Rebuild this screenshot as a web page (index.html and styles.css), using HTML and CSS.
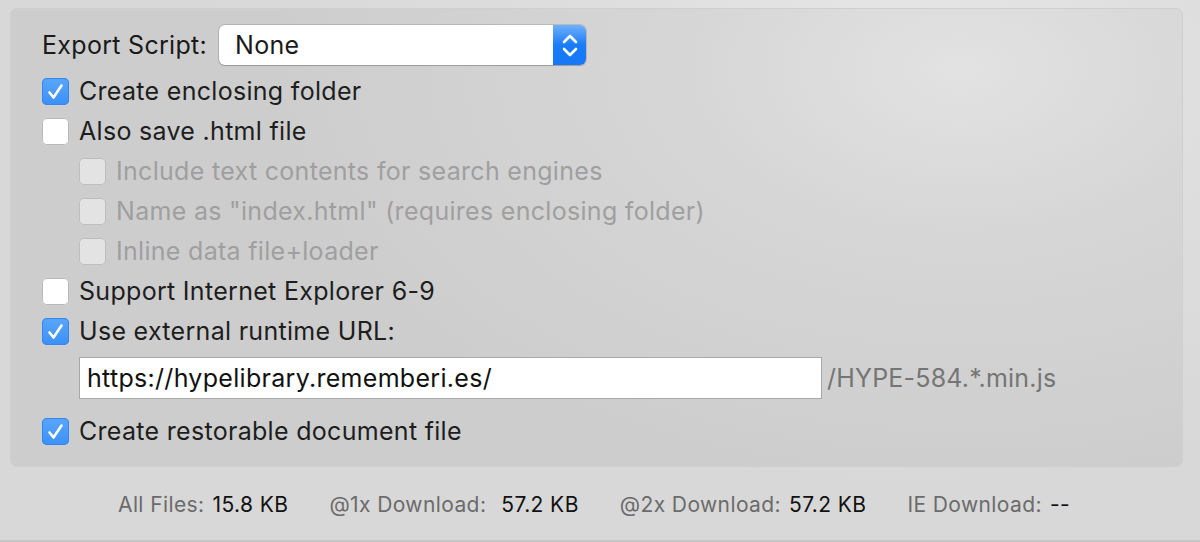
FILE: index.html
```html
<!DOCTYPE html>
<html>
<head>
<meta charset="utf-8">
<link rel="stylesheet" href="styles.css">
</head>
<body>
<div class="window">
  <div class="panel">
    <div class="row export">
      <span class="label">Export Script:</span>
      <div class="select">
        <span class="select-value">None</span>
        <span class="stepper">
          <svg width="32" height="38" viewBox="0 0 32 38"><path d="M10 16 L16 10 L22 16" fill="none" stroke="#fff" stroke-width="2.6" stroke-linecap="round" stroke-linejoin="round"/><path d="M10 23 L16 29 L22 23" fill="none" stroke="#fff" stroke-width="2.6" stroke-linecap="round" stroke-linejoin="round"/></svg>
        </span>
      </div>
    </div>
    <div class="row"><span class="cb on"><svg viewBox="0 0 27 27" width="27" height="27"><path d="M7.5 14.5 L11.5 19.5 L19.5 7.5" fill="none" stroke="#fff" stroke-width="2.6" stroke-linecap="round" stroke-linejoin="round"/></svg></span><span class="text">Create enclosing folder</span></div>
    <div class="row"><span class="cb"></span><span class="text">Also save .html file</span></div>
    <div class="row sub"><span class="cb dis"></span><span class="text dis-text">Include text contents for search engines</span></div>
    <div class="row sub"><span class="cb dis"></span><span class="text dis-text">Name as "index.html" (requires enclosing folder)</span></div>
    <div class="row sub"><span class="cb dis"></span><span class="text dis-text">Inline data file+loader</span></div>
    <div class="row"><span class="cb"></span><span class="text">Support Internet Explorer 6-9</span></div>
    <div class="row"><span class="cb on"><svg viewBox="0 0 27 27" width="27" height="27"><path d="M7.5 14.5 L11.5 19.5 L19.5 7.5" fill="none" stroke="#fff" stroke-width="2.6" stroke-linecap="round" stroke-linejoin="round"/></svg></span><span class="text">Use external runtime URL:</span></div>
    <div class="url-row">
      <div class="field">https://hypelibrary.rememberi.es/</div>
      <span class="suffix">/HYPE-584.*.min.js</span>
    </div>
    <div class="row last"><span class="cb on"><svg viewBox="0 0 27 27" width="27" height="27"><path d="M7.5 14.5 L11.5 19.5 L19.5 7.5" fill="none" stroke="#fff" stroke-width="2.6" stroke-linecap="round" stroke-linejoin="round"/></svg></span><span class="text">Create restorable document file</span></div>
  </div>
  <div class="footer">
    <span class="stat"><span class="k">All Files:</span><span class="v">15.8 KB</span></span>
    <span class="stat"><span class="k">@1x Download:</span><span class="v wide">57.2 KB</span></span>
    <span class="stat"><span class="k">@2x Download:</span><span class="v">57.2 KB</span></span>
    <span class="stat"><span class="k">IE Download:</span><span class="v">--</span></span>
  </div>
</div>
</body>
</html>
```
FILE: styles.css
```css
* { box-sizing: border-box; }
html, body { margin: 0; padding: 0; }
body {
  width: 1200px;
  height: 542px;
  overflow: hidden;
  font-family: "Inter", "Helvetica Neue", "Liberation Sans", sans-serif;
  color: #1e1e1e;
  background: #e2e2e2;
}
.window {
  width: 1200px;
  height: 542px;
  padding: 8px 17px 0 10px;
  background: radial-gradient(ellipse 700px 400px at 900px 80px, #e8e8e8 0%, #dedede 45%, #d8d8d8 100%);
  border-bottom: 2px solid #c6c6c6;
  display: flex;
  flex-direction: column;
}
.panel {
  height: 459px;
  border-radius: 7px;
  border: 1px solid #cfcfcf;
  background: radial-gradient(ellipse 700px 420px at 950px 60px, #e2e2e2 0%, #d6d6d6 40%, #cdcdcd 100%);
  padding: 16px 0 0 31px;
  display: flex;
  flex-direction: column;
}
.row {
  display: flex;
  align-items: center;
  height: 40px;
  font-size: 25px;
  letter-spacing: 0.3px;
}
.row.export { height: 40px; margin-bottom: 6px; }
.row.sub { padding-left: 37px; }
.label { margin-right: 12px; color: #1a1a1a; }
.select {
  width: 367px;
  height: 40px;
  border-radius: 6px;
  background: #fff;
  box-shadow: 0 0 0 1px rgba(0,0,0,0.12), 0 1px 1px rgba(0,0,0,0.15);
  display: flex;
  align-items: center;
  overflow: hidden;
}
.select-value { flex: 1; padding-left: 16px; color: #1a1a1a; }
.stepper {
  width: 33px;
  height: 40px;
  background: linear-gradient(#6fb0fb, #1a7cf8 50%, #1677f7);
  display: flex;
  align-items: center;
  justify-content: center;
}
.cb {
  width: 27px;
  height: 27px;
  border-radius: 5px;
  background: #fff;
  box-shadow: inset 0 0 0 1px #b9b9b9;
  margin-right: 10px;
  flex: none;
  display: flex;
}
.cb.on {
  background: linear-gradient(#5aa6fb, #3b90f8);
  box-shadow: inset 0 0 0 1px #3486ef;
}
.cb.dis {
  background: #e3e3e3;
  box-shadow: inset 0 0 0 1px #bdbdbd;
}
.text { color: #1e1e1e; }
.dis-text { color: #9f9f9f; }
.url-row {
  display: flex;
  align-items: center;
  padding-left: 37px;
  height: 42px;
  margin: 6px 0 12px;
}
.field {
  width: 743px;
  height: 42px;
  background: #fff;
  border: 1px solid #a8a8a8;
  font-size: 25px;
  letter-spacing: 0.3px;
  padding: 0 0 0 7px;
  display: flex;
  align-items: center;
  color: #111;
}
.suffix {
  margin-left: 5px;
  font-size: 25px;
  letter-spacing: 0.2px;
  color: #757575;
}
.footer {
  display: flex;
  padding: 25px 0 0 108px;
  font-size: 21px;
  letter-spacing: 0.4px;
}
.stat { margin-right: 41px; }
.k { color: #6b6b6b; }
.v { color: #111; margin-left: 8px; }
.v.wide { margin-left: 15px; }
```
